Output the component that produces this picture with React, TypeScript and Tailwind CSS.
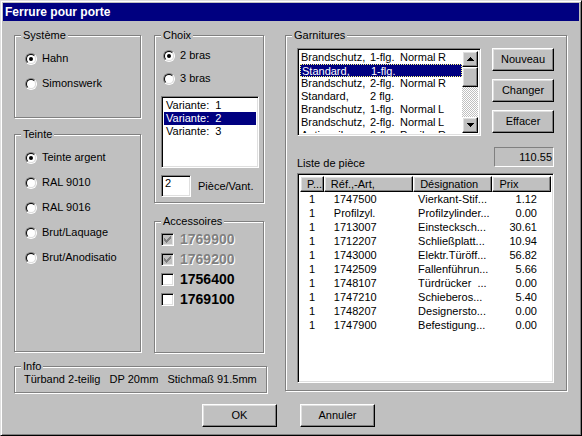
import React from 'react';

const raised =
  'border border-t-white border-l-white border-b-black border-r-black shadow-[inset_-1px_-1px_0_#808080,inset_1px_1px_0_#dfdfdf]';
const sunken =
  'border border-t-[#808080] border-l-[#808080] border-b-white border-r-white shadow-[inset_1px_1px_0_#000,inset_-1px_-1px_0_#dfdfdf]';

interface GroupProps {
  label: string;
  className?: string;
  children?: React.ReactNode;
}

function Group({ label, className = '', children }: GroupProps) {
  return (
    <div className={`relative border border-[#808080] shadow-[inset_1px_1px_0_#fff,1px_1px_0_#fff] ${className}`}>
      <span className="absolute -top-[7px] left-[6px] px-[2px] bg-[#c0c0c0] leading-[13px]">{label}</span>
      {children}
    </div>
  );
}

function Radio({ checked }: { checked?: boolean }) {
  return (
    <span className="w-[12px] h-[12px] shrink-0 rounded-full border border-t-[#808080] border-l-[#808080] border-b-white border-r-white flex">
      <span className="flex-1 rounded-full border border-t-black border-l-black border-b-[#dfdfdf] border-r-[#dfdfdf] bg-white flex items-center justify-center">
        {checked && <span className="w-[4px] h-[4px] rounded-full bg-black" />}
      </span>
    </span>
  );
}

const CHECK_PX = [
  [6, 0], [5, 1], [6, 1], [0, 2], [4, 2], [5, 2], [6, 2], [0, 3], [1, 3], [3, 3], [4, 3], [5, 3],
  [0, 4], [1, 4], [2, 4], [3, 4], [4, 4], [1, 5], [2, 5], [3, 5], [2, 6],
];

function Checkbox({ checked, disabled }: { checked?: boolean; disabled?: boolean }) {
  return (
    <span className={`w-[13px] h-[13px] shrink-0 flex items-center justify-center ${sunken} ${disabled ? 'bg-[#c0c0c0]' : 'bg-white'}`}>
      {checked && (
        <svg width="7" height="7" viewBox="0 0 7 7" shapeRendering="crispEdges">
          {CHECK_PX.map(([x, y]) => (
            <rect key={`${x}-${y}`} x={x} y={y} width="1" height="1" fill={disabled ? '#808080' : '#000'} />
          ))}
        </svg>
      )}
    </span>
  );
}

function Arrow({ down }: { down?: boolean }) {
  return (
    <svg width="7" height="4" viewBox="0 0 7 4" shapeRendering="crispEdges" className={down ? 'rotate-180' : ''}>
      <path d="M3 0h1v1h-1z M2 1h3v1h-3z M1 2h5v1h-5z M0 3h7v1h-7z" fill="#000" />
    </svg>
  );
}

function Button({ children, className = '' }: { children: React.ReactNode; className?: string }) {
  return (
    <div className={`h-[23px] flex items-center justify-center bg-[#c0c0c0] ${raised} ${className}`}>{children}</div>
  );
}

const garnitures = [
  ['Brandschutz,', '1-flg.', 'Normal', 'R'],
  ['Standard,', '1-flg.', '', ''],
  ['Brandschutz,', '2-flg.', 'Normal', 'R'],
  ['Standard,', '2 flg.', '', ''],
  ['Brandschutz,', '1-flg.', 'Normal', 'L'],
  ['Brandschutz,', '2-flg.', 'Normal', 'L'],
  ['Antipanik,', '2-flg.', 'Panik', 'R'],
];

const parts = [
  ['1', '1747500', 'Vierkant-Stif...', '1.12'],
  ['1', 'Profilzyl.', 'Profilzylinder...', '0.00'],
  ['1', '1713007', 'Einstecksch...', '30.61'],
  ['1', '1712207', 'Schließplatt...', '10.94'],
  ['1', '1743000', 'Elektr.Türöff...', '56.82'],
  ['1', '1742509', 'Fallenführun...', '5.66'],
  ['1', '1748107', 'Türdrücker  ...', '0.00'],
  ['1', '1747210', 'Schieberos...', '5.40'],
  ['1', '1748207', 'Designersto...', '0.00'],
  ['1', '1747900', 'Befestigung...', '0.00'],
];

const accessoires = [
  { code: '1769900', checked: true, disabled: true },
  { code: '1769200', checked: true, disabled: true },
  { code: '1756400', checked: false, disabled: false },
  { code: '1769100', checked: false, disabled: false },
];

export default function App() {
  return (
    <div className="w-[582px] h-[436px] bg-[#c0c0c0] border border-t-[#dfdfdf] border-l-[#dfdfdf] border-b-black border-r-black shadow-[inset_1px_1px_0_#fff,inset_-1px_-1px_0_#808080] p-[2px] flex flex-col font-['Liberation_Sans',Arial,sans-serif] text-[11px] leading-[13px] text-black">
      {/* Title bar */}
      <div className="h-[18px] shrink-0 bg-[#000080] flex items-center pl-[2px] text-white font-bold text-[12px]">
        Ferrure pour porte
      </div>

      <div className="flex pl-[11px] pt-[14px]">
        {/* Left: options */}
        <div className="w-[253px] flex flex-col">
          <div className="flex gap-[13px]">
            <div className="w-[127px] flex flex-col">
              <Group label="Système" className="h-[83px] pt-[10px] pl-[10px]">
                {['Hahn', 'Simonswerk'].map((t, i) => (
                  <div key={t} className="h-[25px] flex items-center gap-[5px]">
                    <Radio checked={i === 0} />
                    <span>{t}</span>
                  </div>
                ))}
              </Group>
              <Group label="Teinte" className="mt-[16px] h-[218px] pt-[10px] pl-[10px]">
                {['Teinte argent', 'RAL 9010', 'RAL 9016', 'Brut/Laquage', 'Brut/Anodisatio'].map((t, i) => (
                  <div key={t} className="h-[25px] flex items-center gap-[5px]">
                    <Radio checked={i === 0} />
                    <span>{t}</span>
                  </div>
                ))}
              </Group>
            </div>

            <div className="w-[110px] flex flex-col">
              <Group label="Choix" className="h-[168px] pt-[8px] pl-[6px]">
                {['2 bras', '3 bras'].map((t, i) => (
                  <div key={t} className="h-[23px] ml-[2px] flex items-center gap-[5px]">
                    <Radio checked={i === 0} />
                    <span>{t}</span>
                  </div>
                ))}
                <div className={`mt-[6px] w-[98px] h-[72px] bg-white ${sunken} p-[2px]`}>
                  {[1, 2, 3].map((n) => (
                    <div
                      key={n}
                      className={`h-[13px] pl-[2px] whitespace-pre ${n === 2 ? 'bg-[#000080] text-white' : ''}`}
                    >
                      {`Variante:  ${n}`}
                    </div>
                  ))}
                </div>
                <div className="mt-[7px] flex items-center">
                  <div className={`w-[30px] h-[22px] bg-white ${sunken} pt-[2px] pl-[3px] leading-[11px]`}>2</div>
                  <span className="ml-[7px]">Pièce/Vant.</span>
                </div>
              </Group>

              <Group label="Accessoires" className="mt-[18px] h-[132px] pt-[7px] pl-[6px]">
                {accessoires.map((a) => (
                  <div key={a.code} className="h-[20px] flex items-center">
                    <Checkbox checked={a.checked} disabled={a.disabled} />
                    <span
                      className={`ml-[6px] text-[14px] font-bold leading-[16px] ${
                        a.disabled ? 'text-[#808080] [text-shadow:1px_1px_0_#fff]' : ''
                      }`}
                    >
                      {a.code}
                    </span>
                  </div>
                ))}
              </Group>
            </div>
          </div>

          <Group label="Info" className="mt-[13px] h-[27px] pt-[6px] pl-[9px]">
            <div className="whitespace-pre">Türband 2-teilig   DP 20mm   Stichmaß 91.5mm</div>
          </Group>
        </div>

        {/* Right: garnitures */}
        <Group label="Garnitures" className="ml-[18px] w-[282px] h-[356px] pt-[12px] pl-[11px]">
          <div className="flex">
            <div className="w-[184px] flex flex-col">
              <div className={`h-[88px] bg-white ${sunken} p-[2px] flex`}>
                <div className="w-[164px] overflow-hidden">
                  {garnitures.map((g, i) => (
                    <div
                      key={i}
                      className={`h-[13px] flex pl-[1px] whitespace-pre ${
                        i === 1 ? 'bg-[#000080] text-white border border-dotted border-[#ffff80]' : ''
                      }`}
                    >
                      <span className="w-[69px] shrink-0">{g[0]}</span>
                      <span className="w-[30px] shrink-0">{g[1]}</span>
                      <span className="w-[38px] shrink-0">{g[2]}</span>
                      <span>{g[3]}</span>
                    </div>
                  ))}
                </div>
                <div className="w-[16px] flex flex-col">
                  <div className={`h-[16px] bg-[#c0c0c0] flex items-center justify-center ${raised}`}>
                    <Arrow />
                  </div>
                  <div className={`h-[20px] bg-[#c0c0c0] ${raised}`} />
                  <div className="flex-1 bg-[repeating-conic-gradient(#c0c0c0_0%_25%,#fff_0%_50%)] bg-[length:2px_2px]" />
                  <div className={`h-[16px] bg-[#c0c0c0] flex items-center justify-center ${raised}`}>
                    <Arrow down />
                  </div>
                </div>
              </div>
              <div className="mt-[21px]">Liste de pièce</div>
            </div>

            <div className="ml-[11px] w-[62px] flex flex-col gap-[8px]">
              <Button>Nouveau</Button>
              <Button>Changer</Button>
              <Button>Effacer</Button>
              <div className="mt-[6px] ml-[2px] w-[60px] h-[20px] border border-t-[#808080] border-l-[#808080] border-b-white border-r-white flex items-center justify-end pr-[1px]">
                110.55
              </div>
            </div>
          </div>

          {/* Parts list */}
          <div className={`mt-[3px] w-[257px] h-[210px] bg-white ${sunken} p-[2px] flex flex-col`}>
            <div className="h-[16px] flex shrink-0">
              {[
                ['P...', 'w-[24px]'],
                ['Réf.,-Art,', 'w-[90px]'],
                ['Désignation', 'w-[80px]'],
                ['Prix', 'w-[59px]'],
              ].map(([t, w]) => (
                <div key={t} className={`${w} h-full bg-[#c0c0c0] ${raised} flex items-center pl-[6px]`}>
                  {t}
                </div>
              ))}
            </div>
            {parts.map((p, i) => (
              <div key={i} className="h-[14px] leading-[14px] flex whitespace-pre">
                <span className="w-[24px] pl-[9px]">{p[0]}</span>
                <span className="w-[90px] pl-[10px]">{p[1]}</span>
                <span className="w-[80px] pl-[5px]">{p[2]}</span>
                <span className="w-[59px] pr-[14px] text-right">{p[3]}</span>
              </div>
            ))}
          </div>
        </Group>
      </div>

      <div className="flex pl-[199px] mt-[11px] gap-[23px]">
        <Button className="w-[75px]">OK</Button>
        <Button className="w-[75px]">Annuler</Button>
      </div>
    </div>
  );
}
